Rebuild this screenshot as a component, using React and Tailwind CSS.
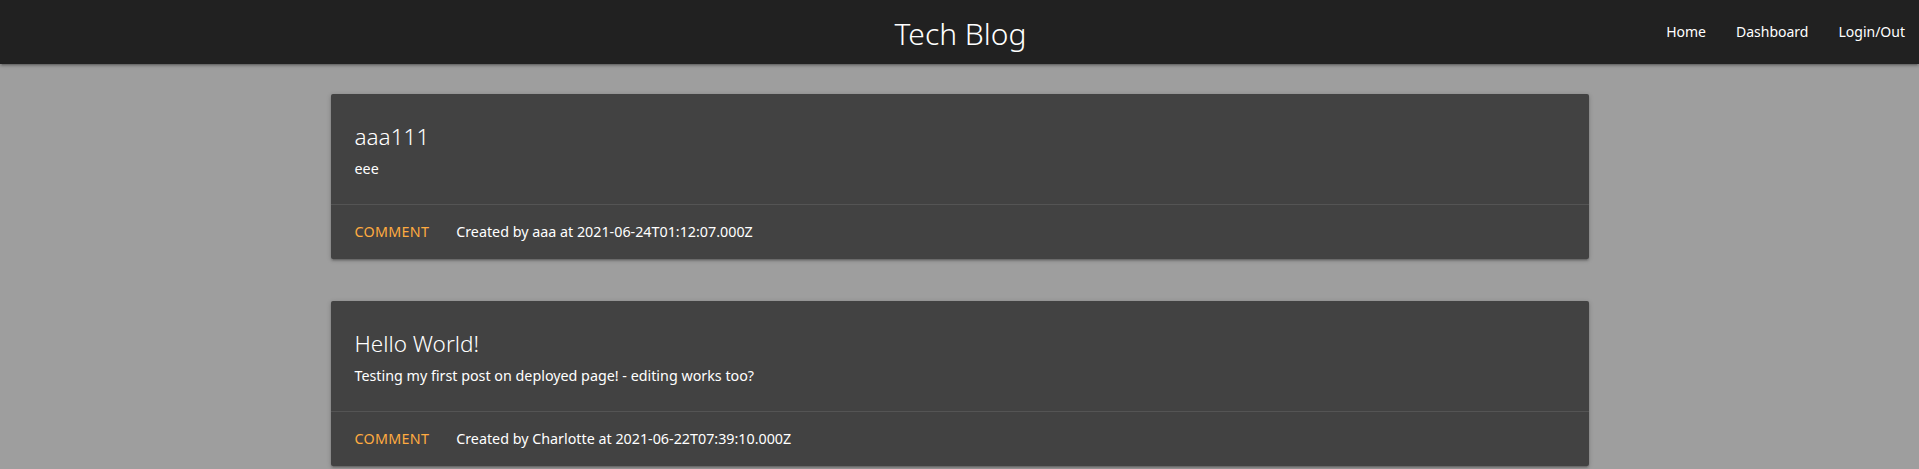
const posts = [
  {
    id: 1,
    title: "aaa111",
    body: "eee",
    author: "aaa",
    date: "2021-06-24T01:12:07.000Z",
  },
  {
    id: 2,
    title: "Hello World!",
    body: "Testing my first post on deployed page! - editing works too?",
    author: "Charlotte",
    date: "2021-06-22T07:39:10.000Z",
  },
];

const App = () => {
  return (
    <div className="min-h-screen bg-[#9e9e9e] font-['Segoe_UI','Noto_Sans',sans-serif] text-[14.3px] leading-[22.5px]">
      <nav className="relative z-10 flex h-16 items-center bg-[#212121] text-white shadow-[0_2px_2px_0_rgba(0,0,0,0.14),0_3px_1px_-2px_rgba(0,0,0,0.12),0_1px_5px_0_rgba(0,0,0,0.2)]">
        <div className="flex-1" />
        <a className="pl-4 pt-1 text-[30px] font-light leading-none">Tech Blog</a>
        <div className="flex flex-1 justify-end pr-[14px] text-[14px]">
          <a className="px-[15px]">Home</a>
          <a className="px-[15px]">Dashboard</a>
          <a className="pl-[15px]">Login/Out</a>
        </div>
      </nav>

      <main className="mx-auto flex w-[1258px] flex-col gap-[42px] pt-[30px]">
        {posts.map((post) => (
          <div
            key={post.id}
            className="rounded-[2px] bg-[#424242] text-white shadow-[0_2px_2px_0_rgba(0,0,0,0.14),0_3px_1px_-2px_rgba(0,0,0,0.12),0_1px_5px_0_rgba(0,0,0,0.2)]"
          >
            <div className="h-[110px] p-6">
              <span className="mb-[5px] block pt-[3px] text-[22.5px] font-light leading-8">{post.title}</span>
              <p>{post.body}</p>
            </div>
            <div className="flex h-[55px] items-center border-t border-[rgba(160,160,160,0.2)] px-6">
              <a className="mr-[27px] uppercase tracking-[0.3px] text-[#ffab40]">Comment</a>
              <span>
                Created by {post.author} at {post.date}
              </span>
            </div>
          </div>
        ))}
      </main>
    </div>
  );
};

export default App;
